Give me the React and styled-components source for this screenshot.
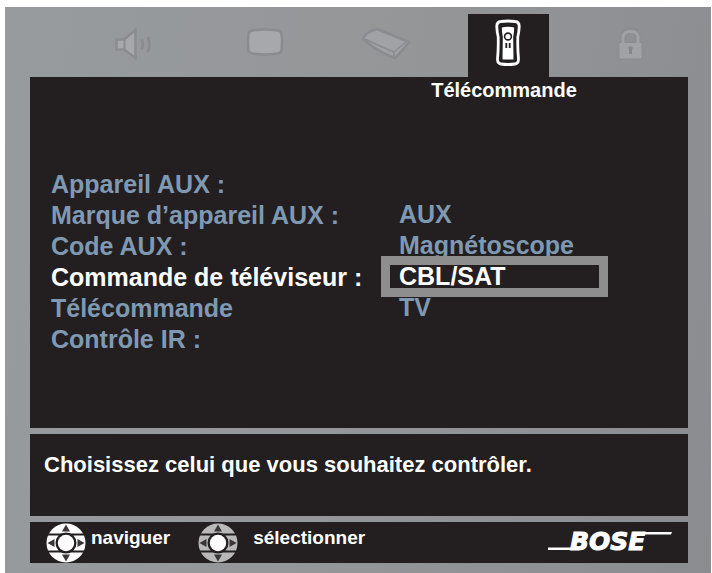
import React, { useState } from "react";
import styled, { createGlobalStyle } from "styled-components";

const TABS = [
  { id: "audio", label: "Audio", Icon: SpeakerIcon },
  { id: "video", label: "Vidéo", Icon: ScreenIcon },
  { id: "media", label: "Centre multimédia", Icon: CenterIcon },
  { id: "remote", label: "Télécommande", Icon: RemoteIcon },
  { id: "lock", label: "Verrouillage", Icon: LockIcon },
];

const SETTINGS = [
  "Appareil AUX :",
  "Marque d’appareil AUX :",
  "Code AUX :",
  "Commande de téléviseur :",
  "Télécommande",
  "Contrôle IR :",
];

const OPTIONS = ["AUX", "Magnétoscope", "CBL/SAT", "TV"];

function App() {
  const [tab, setTab] = useState("remote");
  const [option, setOption] = useState("CBL/SAT");

  return (
    <>
      <GlobalStyle />
      <Frame>
        <TabBar>
          {TABS.map(({ id, label, Icon }) => (
            <Tab
              key={id}
              type="button"
              aria-label={label}
              $active={id === tab}
              onClick={() => setTab(id)}
            >
              <Icon />
            </Tab>
          ))}
        </TabBar>
        <Main>
          <TitleRow>
            <Title>Télécommande</Title>
          </TitleRow>
          <Menu>
            <List>
              {SETTINGS.map((name) => (
                <Setting key={name} $active={name === "Commande de téléviseur :"}>
                  {name}
                </Setting>
              ))}
            </List>
            <OptionList>
              {OPTIONS.map((name) => (
                <OptionItem key={name}>
                  <Option
                    type="button"
                    aria-pressed={name === option}
                    $active={name === option}
                    onClick={() => setOption(name)}
                  >
                    {name}
                  </Option>
                </OptionItem>
              ))}
            </OptionList>
          </Menu>
        </Main>
        <Message>Choisissez celui que vous souhaitez contrôler.</Message>
        <Footer>
          <Hint $gap="5px">
            <PadIcon color="#fff" />
            <HintText>naviguer</HintText>
          </Hint>
          <Hint $gap="15px">
            <PadIcon color="#b9b9b9" />
            <HintText>sélectionner</HintText>
          </Hint>
          <Logo />
        </Footer>
      </Frame>
    </>
  );
}

export default App;

function SpeakerIcon() {
  return (
    <svg width="42" height="36" viewBox="0 0 42 36" fill="none">
      <path d="M3.500 12.500H11L22.500 3V31L11 22.500H3.500Z" fill="#a6a8ab" stroke="#8a8c8f" strokeWidth="2.500" />
      <path d="M11.500 12V23" stroke="#8a8c8f" strokeWidth="2" />
      <path d="M28.500 12.500Q31 17.500 28.500 22.500M34.500 10Q38.500 17.500 34.500 25" stroke="#8a8c8f" strokeWidth="3" />
    </svg>
  );
}

function ScreenIcon() {
  return (
    <svg width="38" height="30" viewBox="0 0 38 30">
      <path
        d="M6 3.500Q19 1.500 32 3.500Q35 4 35.500 7Q36.500 15 35.500 23Q35 26 32 26.500Q19 28.500 6 26.500Q3 26 2.500 23Q1.500 15 2.500 7Q3 4 6 3.500Z"
        fill="#a6a8ab"
        stroke="#8a8c8f"
        strokeWidth="2.500"
      />
    </svg>
  );
}

function CenterIcon() {
  return (
    <svg width="50" height="34" viewBox="0 0 50 34" fill="none" strokeLinejoin="round">
      <path d="M2 12Q4 5 16 2L48 15Q42 23 34 31Q17 25 2 12Z" fill="#a0a2a5" stroke="#8a8c8f" strokeWidth="2.500" />
      <path d="M4 12Q18 19 33 25L45 15M33 25V30" stroke="#8a8c8f" strokeWidth="1.500" />
    </svg>
  );
}

function RemoteIcon() {
  return (
    <svg width="28" height="48" viewBox="0 0 28 48">
      <path
        d="M7 2.500Q14 1.500 21 2.500Q25.500 3 25.200 8Q25 13 23.800 18Q23.500 30 24.500 40Q24.500 44.500 21 45Q14 46 7 45Q3.500 44.500 3.500 40Q4.500 30 4.200 18Q3 13 2.800 8Q2.500 3 7 2.500Z"
        fill="#231f20"
        stroke="#fff"
        strokeWidth="2.800"
      />
      <path d="M7.800 8.500Q14 7 20.200 8.500Q20.200 13 19.200 18L19.500 40.500H8.500L8.800 18Q7.800 13 7.800 8.500Z" fill="#fff" />
      <circle cx="14" cy="17.500" r="3.400" fill="#fff" stroke="#231f20" strokeWidth="1.600" />
      <path d="M12.300 24V29M15.700 24V29" stroke="#231f20" strokeWidth="1.800" />
    </svg>
  );
}

function LockIcon() {
  return (
    <svg width="30" height="36" viewBox="0 0 30 36">
      <path d="M7.500 17V10Q7.500 3 14.500 3Q21.500 3 21.500 10V17" fill="none" stroke="#8a8c8f" strokeWidth="6" />
      <path d="M2.500 14.500H26.500V33H2.500Z" fill="#8a8c8f" />
      <path d="M7 17V11Q7 4.500 14.500 4.500Q22 4.500 22 11V17" fill="none" stroke="#a0a2a5" strokeWidth="3" />
      <path d="M3.500 16H25.500V31.500H3.500Z" fill="#a0a2a5" />
      <path d="M12 20.500Q14.500 18 17 20.500L16 23V27H13V23Z" fill="#85878a" />
    </svg>
  );
}

// round four-way pad, the ring takes the given colour
function PadIcon({ color }) {
  return (
    <svg width="40" height="40" viewBox="0 0 40 40">
      <circle cx="20" cy="20" r="19.500" fill={color} />
      <path d="M1 11.500H39M1 28.500H39" stroke="#231f20" strokeWidth="2.200" />
      <circle cx="20" cy="20" r="10.500" fill="#231f20" />
      <circle cx="20" cy="20" r="8.200" fill="#fff" />
      <path d="M20 1.500L24 8.500H16ZM20 38.500L24 31.500H16ZM1.500 20L8.500 16V24ZM38.500 20L31.500 16V24Z" fill="#3a3637" />
    </svg>
  );
}

function Logo() {
  return (
    <LogoSvg width="126" height="34" viewBox="0 0 126 34" role="img" aria-label="BOSE">
      <path d="M1 21.500H30L29 24H1Z" fill="#fff" />
      <path d="M92 6H125L124 8.500H91Z" fill="#fff" />
      <LogoText x="23" y="24">BOSE</LogoText>
    </LogoSvg>
  );
}

const GlobalStyle = createGlobalStyle`
  body {
    margin: 0;
    background: #fff;
    font-family: "Liberation Sans", Arial, sans-serif;
    font-weight: bold;
  }
`;

const columns = "122fr 140fr 102fr 142fr 104fr";

const Frame = styled.div`
  display: flex;
  flex-direction: column;
  gap: 6px;
  margin: 7px 1px 0 5px;
  padding: 7px 23px 10px 25px;
  background: linear-gradient(100deg, #989b9e 0%, #949698 50%, #8b8c90 100%);
`;

const TabBar = styled.nav`
  display: grid;
  grid-template-columns: ${columns};
  justify-items: center;
  height: 63px;
  margin-bottom: -6px;
  padding: 0 5px 0 43px;
`;

const Tab = styled.button`
  display: flex;
  justify-content: center;
  width: 81px;
  padding: ${(props) => (props.$active ? "5px" : "13px")} 0 0;
  border: none;
  background: ${(props) => (props.$active ? "#231f20" : "transparent")};
  cursor: pointer;
`;

const Main = styled.main`
  padding-bottom: 73px;
  background: #231f20;
`;

const TitleRow = styled.header`
  display: grid;
  grid-template-columns: ${columns};
  justify-items: center;
  padding: 0 8px 0 40px;
`;

const Title = styled.h1`
  grid-column: 4;
  margin: 0;
  color: #fff;
  font-size: 20px;
  line-height: 26px;
`;

const Menu = styled.div`
  display: grid;
  grid-template-columns: 339fr 298fr;
  padding: 66px 0 0 21px;
`;

const List = styled.ul`
  margin: 0;
  padding: 0;
  list-style: none;
`;

const OptionList = styled(List)`
  padding-top: 31px;
`;

const Setting = styled.li`
  color: ${(props) => (props.$active ? "#fff" : "#7f99b3")};
  font-size: 25px;
  line-height: 31px;
  white-space: nowrap;
`;

const OptionItem = styled.li`
  padding: 3px 0 5px;
`;

const Option = styled.button`
  display: block;
  width: 70%;
  padding: 0 9px;
  border: none;
  outline: ${(props) => (props.$active ? "9px solid #8e8e8e" : "none")};
  background: transparent;
  color: ${(props) => (props.$active ? "#fff" : "#7f99b3")};
  font: inherit;
  font-size: 25px;
  line-height: 23px;
  text-align: left;
  cursor: pointer;
`;

const Message = styled.p`
  margin: 0;
  padding: 16px 14px 36px;
  background: #231f20;
  color: #fff;
  font-size: 22px;
  line-height: 30px;
`;

const Footer = styled.footer`
  display: flex;
  align-items: center;
  gap: 28px;
  height: 41px;
  padding: 0 15px 0 16px;
  background: #231f20;
`;

const Hint = styled.div`
  display: flex;
  align-items: center;
  gap: ${(props) => props.$gap};
`;

const HintText = styled.span`
  padding-bottom: 10px;
  color: #fff;
  font-size: 19px;
  line-height: 22px;
`;

const LogoSvg = styled.svg`
  margin-left: auto;
`;

const LogoText = styled.text`
  fill: #fff;
  stroke: #fff;
  font-family: "DejaVu Sans", sans-serif;
  font-size: 25px;
  font-style: italic;
  font-weight: bold;
`;
